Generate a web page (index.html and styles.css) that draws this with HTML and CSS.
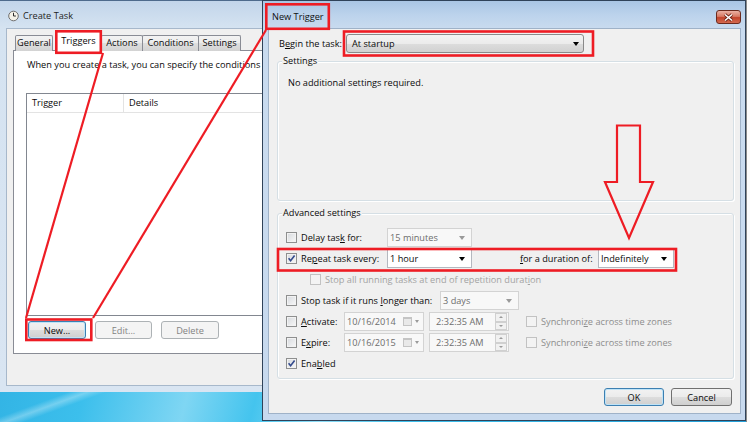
FILE: index.html
```html
<!DOCTYPE html>
<html lang="en">
<head>
<meta charset="utf-8">
<title>Create Task - New Trigger</title>
<link rel="stylesheet" href="styles.css">
</head>
<body>
<div class="desktop">
  <div class="backwin"></div>

  <section class="win task-win">
    <header class="task-title">
      <svg class="clock" width="11" height="12" viewBox="0 0 11 12" aria-hidden="true">
        <circle cx="5.5" cy="6" r="4.8" fill="#f5f2e8" stroke="#6f6f6f"/>
        <path d="M5.5 2.8V6h2.4" fill="none" stroke="#2b2b2b"/>
      </svg>
      <span>Create Task</span>
    </header>
    <div class="task-body">
      <nav class="tabs">
        <div class="tab tab-general">General</div>
        <div class="tab tab-active">Triggers</div>
        <div class="tab tab-actions">Actions</div>
        <div class="tab tab-conditions">Conditions</div>
        <div class="tab tab-settings">Settings</div>
      </nav>
      <div class="tabpanel">
        <p class="intro">When you create a task, you can specify the conditions</p>
        <div class="listview">
          <div class="lv-head">
            <span class="lv-col lv-col-trigger">Trigger</span>
            <span class="lv-col lv-col-details">Details</span>
          </div>
        </div>
        <div class="lv-buttons">
          <button class="btn btn-default btn-new">New...</button>
          <button class="btn btn-disabled btn-edit">Edit...</button>
          <button class="btn btn-disabled btn-delete">Delete</button>
        </div>
      </div>
    </div>
  </section>

  <section class="win trig-win">
    <header class="trig-title">
      <span class="trig-title-text">New Trigger</span>
      <span class="close-btn">
        <svg width="11" height="9" viewBox="0 0 11 9" aria-hidden="true">
          <path d="M2 1.5l7 6M9 1.5l-7 6" stroke="#6a2216" stroke-width="3.2"/>
          <path d="M2 1.5l7 6M9 1.5l-7 6" stroke="#ffffff" stroke-width="1.6"/>
        </svg>
      </span>
    </header>
    <div class="trig-body">
      <div class="begin-row">
        <span class="begin-label">B<u>e</u>gin the task:</span>
        <div class="dropdown"><span>At startup</span><i class="arrow"></i></div>
      </div>

      <div class="group group-settings">
        <span class="group-label">Settings</span>
        <p class="no-settings">No additional settings required.</p>
      </div>

      <div class="group group-adv">
        <span class="group-label">Advanced settings</span>

        <div class="row">
          <span class="cb"></span>
          <span class="lbl lbl-main">Delay tas<u>k</u> for:</span>
          <div class="combo combo-disabled combo-main"><span>15 minutes</span><i class="arrow arrow-gray"></i></div>
        </div>

        <div class="row">
          <span class="cb cb-checked"><svg width="9" height="9" viewBox="0 0 9 9"><path d="M1.6 4.3L3.6 6.8L7.6 1.6" fill="none" stroke="#334a8c" stroke-width="1.6"/></svg></span>
          <span class="lbl lbl-main">Re<u>p</u>eat task every:</span>
          <div class="combo combo-main"><span>1 hour</span><i class="arrow"></i></div>
          <span class="lbl lbl-duration"><u>f</u>or a duration of:</span>
          <div class="combo combo-duration"><span>Indefinitely</span><i class="arrow"></i></div>
        </div>

        <div class="row row-indent">
          <span class="cb cb-disabled"></span>
          <span class="lbl lbl-disabled">Stop all running tasks at end of repetition durat<u>i</u>on</span>
        </div>

        <div class="row">
          <span class="cb"></span>
          <span class="lbl lbl-stop">Stop task if it runs <u>l</u>onger than:</span>
          <div class="combo combo-disabled combo-stop"><span>3 days</span><i class="arrow arrow-gray"></i></div>
        </div>

        <div class="row">
          <span class="cb"></span>
          <span class="lbl lbl-date"><u>A</u>ctivate:</span>
          <div class="field datebox"><span>10/16/2014</span><span class="cal"></span><i class="arrow arrow-gray arrow-small"></i></div>
          <div class="field timebox"><span>2:32:35 AM</span><span class="spin"><span class="spin-up"></span><span class="spin-down"></span></span></div>
          <span class="cb cb-disabled"></span>
          <span class="lbl lbl-sync">Synchroni<u>z</u>e across time zones</span>
        </div>

        <div class="row">
          <span class="cb"></span>
          <span class="lbl lbl-date">E<u>x</u>pire:</span>
          <div class="field datebox"><span>10/16/2015</span><span class="cal"></span><i class="arrow arrow-gray arrow-small"></i></div>
          <div class="field timebox"><span>2:32:35 AM</span><span class="spin"><span class="spin-up"></span><span class="spin-down"></span></span></div>
          <span class="cb cb-disabled"></span>
          <span class="lbl lbl-sync">Synchroni<u>z</u>e across time zones</span>
        </div>

        <div class="row">
          <span class="cb cb-checked"><svg width="9" height="9" viewBox="0 0 9 9"><path d="M1.6 4.3L3.6 6.8L7.6 1.6" fill="none" stroke="#334a8c" stroke-width="1.6"/></svg></span>
          <span class="lbl">Ena<u>b</u>led</span>
        </div>
      </div>

      <div class="dlg-buttons">
        <button class="btn btn-default btn-ok">OK</button>
        <button class="btn btn-cancel">Cancel</button>
      </div>
    </div>
  </section>

  <svg class="annot" width="750" height="422" viewBox="0 0 750 422" aria-hidden="true">
    <g fill="none" stroke="#ee1c24" stroke-width="2.6">
      <rect x="56.3" y="31.3" width="44.5" height="21.5"/>
      <rect x="266.3" y="4.3" width="62.5" height="24.5"/>
      <rect x="344" y="31.5" width="249" height="24"/>
      <rect x="26.3" y="319.5" width="65" height="20.5"/>
      <rect x="278" y="249" width="398" height="21.5"/>
    </g>
    <g fill="none" stroke="#ee1c24" stroke-width="2.2">
      <path d="M103 53L26 318"/>
      <path d="M266 30L93 318"/>
      <polygon points="617,125.5 640,125.5 640,182 653,182 629,238 605,182 617,182"/>
    </g>
  </svg>
</div>
</body>
</html>
```
FILE: styles.css
```css
* { box-sizing: border-box; margin: 0; padding: 0; }

html, body { width: 750px; height: 422px; overflow: hidden; }

body {
  font-family: "Open Sans", "Noto Sans", "DejaVu Sans", sans-serif;
  font-size: 9.2px;
  line-height: 14px;
  color: #0a0a0a;
  background: #2fb2e3;
}

u { text-decoration: underline; text-underline-offset: 1px; text-decoration-thickness: 1px; }

.desktop {
  position: relative;
  width: 750px;
  height: 422px;
  overflow: hidden;
  background:
    linear-gradient(160deg, transparent 0 60%, rgba(255,255,255,0.3) 61%, transparent 62% 100%),
    linear-gradient(105deg, #27a7dc 0%, #3cbfec 22%, #7fd6f3 34%, #44c4ee 42%, #8edcf5 50%, #3ebfeb 60%, #239fd8 100%);
}

.backwin {
  position: absolute;
  left: 746px;
  top: 0;
  width: 10px;
  height: 422px;
  background: #fbfbfb;
  border-left: 1px solid #8a8a8a;
}

.win { position: absolute; top: 0; }

/* ---------- Create Task (background window) ---------- */
.task-win {
  left: 0;
  width: 430px;
  height: 392px;
  padding: 0 6px 6px 6px;
  display: flex;
  flex-direction: column;
  border-top: 1px solid #4e6a8c;
  background: linear-gradient(#c2d5ea, #d5e3f1 27px, #d9e5f2 100%);
}

.task-title {
  height: 27px;
  flex: none;
  display: flex;
  align-items: center;
  gap: 4px;
  padding: 3px 0 0 2px;
  color: #1e1e1e;
}

.clock { flex: none; }

.task-body {
  flex: 1;
  background: #f0f0f0;
  border: 1px solid #a7b8cb;
  padding: 1px 0 0 6px;
}

.tabs {
  display: flex;
  align-items: flex-end;
  height: 21px;
  margin: 0 0 -1px 2px;
  position: relative;
  z-index: 1;
}

.tab {
  height: 16px;
  border: 1px solid #898c95;
  border-bottom: none;
  border-radius: 2px 2px 0 0;
  background: linear-gradient(#f3f3f3, #ebebeb 50%, #dedede 50%, #d3d3d3);
  text-align: center;
  line-height: 14px;
  white-space: nowrap;
}

.tab-general { width: 38px; }
.tab-active { width: 47px; height: 21px; margin-left: 2px; background: #fff; line-height: 20px; }
.tab-actions { width: 42px; margin-left: -1px; }
.tab-conditions { width: 57px; margin-left: -1px; }
.tab-settings { width: 43px; margin-left: -1px; }

.tabpanel {
  width: 410px;
  height: 304px;
  background: #fff;
  border: 1px solid #898c95;
  padding: 7px 0 0 12px;
  position: relative;
}

.intro { padding-left: 1px; width: 236px; overflow: hidden; white-space: nowrap; }

.listview {
  margin-top: 21px;
  width: 400px;
  height: 223px;
  border: 1px solid #828790;
  background: #fff;
}

.lv-head {
  display: flex;
  height: 19px;
  line-height: 18px;
  border-bottom: 1px solid #e3e3e3;
}

.lv-col { padding-left: 5px; border-right: 1px solid #e3e3e3; }
.lv-col-trigger { width: 97px; }
.lv-col-details { width: 160px; }

.lv-buttons { display: flex; gap: 9px; margin: 5px 0 0 2px; }

.btn {
  height: 18px;
  font: inherit;
  line-height: 15px;
  border: 1px solid #707070;
  border-radius: 3px;
  background: linear-gradient(#f2f2f2, #ebebeb 50%, #dddddd 50%, #cfcfcf);
  color: #0a0a0a;
  text-align: center;
}

.btn-default {
  border-color: #3c7fb1;
  box-shadow: inset 0 0 0 1px #bfe3f7;
}

.btn-disabled {
  border-color: #adb2b5;
  background: #f4f4f4;
  color: #838383;
}

.btn-new { width: 58px; }
.btn-edit { width: 57px; }
.btn-delete { width: 58px; }

/* ---------- New Trigger dialog ---------- */
.trig-win {
  left: 262px;
  width: 484px;
  height: 421px;
  border: 1px solid #2f4259;
  padding: 0 4px 6px 5px;
  display: flex;
  flex-direction: column;
  background: linear-gradient(#a9c5e4, #bcd3ec 14px, #c9dbef 28px, #c7d9ee 100%);
}

.trig-title {
  height: 27px;
  flex: none;
  display: flex;
  justify-content: space-between;
  align-items: flex-start;
}

.trig-title-text { margin: 9px 0 0 4px; line-height: 14px; color: #111; }

.close-btn {
  margin-top: 9px;
  width: 25px;
  height: 14px;
  display: flex;
  align-items: center;
  justify-content: center;
  border: 1px solid #6b2a1e;
  border-radius: 3px;
  background: linear-gradient(#eab1a4, #d87a64 45%, #c2432b 55%, #d46a50);
}

.trig-body {
  flex: 1;
  background: #f0f0f0;
  border: 1px solid #9fb2c8;
  padding: 5px 6px 0 8px;
  display: flex;
  flex-direction: column;
}

.begin-row { display: flex; align-items: center; height: 19px; margin-left: 2px; }
.begin-label { width: 67px; white-space: nowrap; line-height: 12px; }

.dropdown {
  width: 238px;
  height: 19px;
  display: flex;
  align-items: center;
  justify-content: space-between;
  padding: 0 4px 0 5px;
  border: 1px solid #8a8a8a;
  border-radius: 3px;
  background: linear-gradient(#f3f3f3, #ebebeb 50%, #dddddd 50%, #d1d1d1);
}

.arrow {
  width: 0;
  height: 0;
  border-left: 3px solid transparent;
  border-right: 3px solid transparent;
  border-top: 4px solid #000;
}
.arrow-gray { border-top-color: #9a9a9a; }
.arrow-small { border-left-width: 2.5px; border-right-width: 2.5px; border-top-width: 3px; }

.group {
  position: relative;
  flex: none;
  border: 1px solid #d5dfe5;
  border-radius: 3px;
  box-shadow: inset 1px 1px 0 #fff, 1px 1px 0 #fff;
}

.group-label {
  position: absolute;
  left: 4px;
  top: -7px;
  padding: 0 1px;
  line-height: 12px;
  background: #f0f0f0;
  white-space: nowrap;
}

.group-settings { margin-top: 8px; height: 140px; padding: 14px 0 0 10px; }
.group-adv { margin-top: 12px; height: 166px; padding: 13px 0 0 8px; }

.row { display: flex; align-items: center; height: 21px; white-space: nowrap; }
.row-indent { padding-left: 24px; }

.cb {
  flex: none;
  width: 11px;
  height: 11px;
  margin-right: 4px;
  display: flex;
  align-items: center;
  justify-content: center;
  border: 1px solid #8e8f8f;
  background: linear-gradient(135deg, #d6d9dd, #f8f8f8);
  box-shadow: inset 0 0 0 1px #f2f2f2;
}
.cb-disabled { border-color: #c2c2c2; background: #f3f3f3; box-shadow: none; }

.lbl { flex: none; }
.lbl-main { width: 86px; }
.lbl-duration { width: 78px; margin-left: 48px; }
.lbl-stop { width: 139px; }
.lbl-date { width: 43px; }
.lbl-disabled { color: #a3a3a3; }
.lbl-sync { color: #8d8d8d; }

.combo {
  flex: none;
  height: 19px;
  display: flex;
  align-items: center;
  justify-content: space-between;
  padding: 0 6px 0 2px;
  border: 1px solid #b4b8bf;
  background: #fff;
}
.combo-disabled { background: #f8f8f8; border-color: #d3d3d3; color: #6d6d6d; }
.combo-main { width: 85px; }
.combo-duration { width: 76px; }
.combo-stop { width: 79px; }

.field {
  flex: none;
  height: 19px;
  display: flex;
  align-items: center;
  border: 1px solid #d3d3d3;
  background: #f8f8f8;
  color: #6d6d6d;
}

.datebox { width: 80px; padding: 0 4px 0 2px; margin-right: 5px; }
.datebox > span:first-child { flex: 1; }
.cal {
  width: 9px;
  height: 9px;
  margin-right: 3px;
  border: 1px solid #c4c4c4;
  border-top: 2px solid #c4c4c4;
  background: #e9e9e9;
}

.timebox { width: 80px; padding: 0 1px 0 6px; margin-right: 17px; justify-content: space-between; }

.spin { display: flex; flex-direction: column; width: 12px; height: 17px; }
.spin-up, .spin-down {
  flex: 1;
  border: 1px solid #d0d0d0;
  background: #f1f1f1;
  position: relative;
}
.spin-up::after, .spin-down::after {
  content: "";
  position: absolute;
  left: 3px;
  top: 2px;
  border-left: 2px solid transparent;
  border-right: 2px solid transparent;
}
.spin-up::after { border-bottom: 2px solid #9a9a9a; }
.spin-down::after { border-top: 2px solid #9a9a9a; }

.no-settings { white-space: nowrap; }

.dlg-buttons { display: flex; justify-content: flex-end; gap: 7px; margin: 9px 2px 0 0; }
.btn-ok { width: 60px; }
.btn-cancel { width: 61px; }

/* ---------- annotations ---------- */
.annot {
  position: absolute;
  left: 0;
  top: 0;
  z-index: 5;
  pointer-events: none;
}
```
